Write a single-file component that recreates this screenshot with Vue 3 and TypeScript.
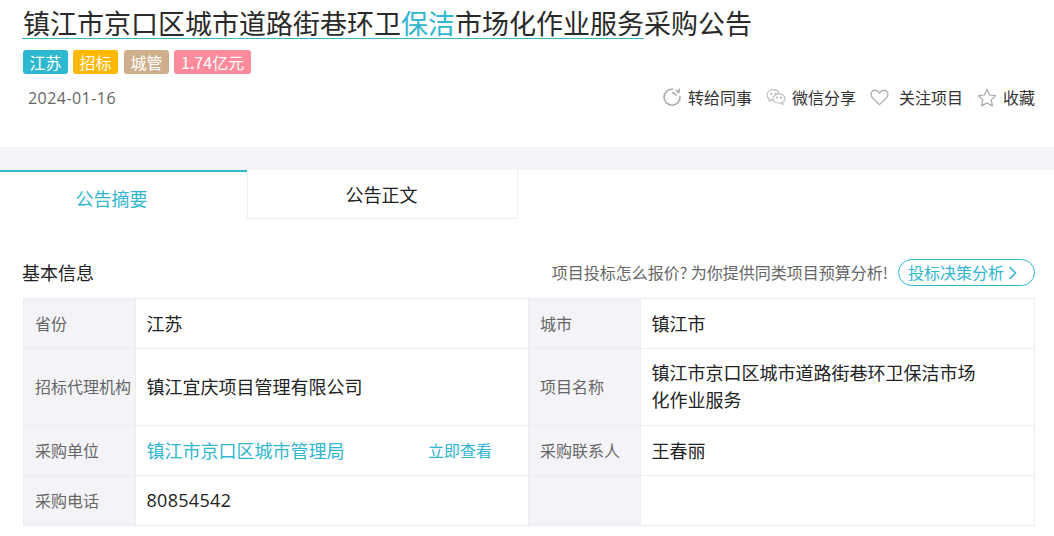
<script setup lang="ts">
const tags = [
  { text: '江苏', cls: 'tag-a' },
  { text: '招标', cls: 'tag-b' },
  { text: '城管', cls: 'tag-c' },
  { text: '1.74亿元', cls: 'tag-d' },
]
</script>

<template>
  <div class="page">
    <header class="head">
      <h1 class="title"><span class="under">镇江市京口区城市道路街巷环卫<em>保洁</em>市场化作业服务</span>采购公告</h1>
      <div class="tags">
        <span v-for="t in tags" :key="t.text" class="tag" :class="t.cls">{{ t.text }}</span>
      </div>
      <div class="meta">
        <span class="date">2024-01-16</span>
        <div class="actions">
          <span class="act a1">
            <svg width="20" height="20" viewBox="0 0 20 20" fill="none" stroke="#aaa" stroke-width="1.6">
              <path d="M10.5 2.200A8 8 0 1 0 18 9.500" stroke-linecap="round" />
              <path d="M14.200 3.400l2.600 2.300M16.800 5.700L17.300 2.400" stroke-linecap="round" />
              <path d="M14 8.200A4.600 4.600 0 0 0 10.400 5.600" stroke-linecap="round" />
            </svg>
            转给同事
          </span>
          <span class="act a2">
            <svg width="20" height="18" viewBox="0 0 20 18" fill="none" stroke="#bbb" stroke-width="1.1">
              <path d="M7.600 1.600C4 1.600 1 4 1 7c0 1.700 1 3.200 2.500 4.200L3 13l2.100-1.100c.7.2 1.300.3 2 .3" />
              <path d="M13 6.200C12.600 3.600 10.300 1.600 7.600 1.600" />
              <ellipse cx="13" cy="10.600" rx="6" ry="4.700" />
              <path d="M16.400 14.400l.6 1.900-2.200-1.200" />
              <circle cx="5.200" cy="5.800" r=".6" fill="#bbb" />
              <circle cx="9.600" cy="5.800" r=".6" fill="#bbb" />
              <circle cx="11" cy="9.600" r=".5" fill="#bbb" />
              <circle cx="15" cy="9.600" r=".5" fill="#bbb" />
            </svg>
            微信分享
          </span>
          <span class="act a3">
            <svg width="19" height="17" viewBox="0 0 19 17" fill="none" stroke="#aaa" stroke-width="1.3">
              <path d="M9.500 15.600L2.400 8.600C.6 6.800.6 4 2.300 2.400c1.800-1.700 4.700-1.400 6.200.4l1 1.200 1-1.200c1.500-1.800 4.400-2.100 6.200-.4 1.700 1.600 1.700 4.400-.1 6.200z" stroke-linejoin="round" />
            </svg>
            关注项目
          </span>
          <span class="act a4">
            <svg width="20" height="19" viewBox="0 0 20 19" fill="none" stroke="#aaa" stroke-width="1.2">
              <path d="M10 1.400l2.600 5.600 6 .7-4.400 4.200 1.200 6L10 15l-5.400 2.900 1.200-6L1.400 7.700l6-.7z" stroke-linejoin="round" />
            </svg>
            收藏
          </span>
        </div>
      </div>
    </header>

    <div class="band"></div>

    <nav class="tabs">
      <div class="tab on">公告摘要</div>
      <div class="tab off">公告正文</div>
    </nav>

    <section class="info">
      <div class="info-head">
        <h2 class="info-title">基本信息</h2>
        <div class="promo">
          <span class="promo-text">项目投标怎么报价<span class="qmark">?</span>为你提供同类项目预算分析!</span>
          <span class="btn"><span class="btn-text">投标决策分析</span>
            <svg width="10" height="14" viewBox="0 0 10 14" fill="none" stroke="#2eb8cf" stroke-width="1.6"><path d="M1.500 1l6 6-6 6" /></svg>
          </span>
        </div>
      </div>
      <table class="grid">
        <colgroup>
          <col class="c1" /><col class="c2" /><col class="c3" /><col class="c4" />
        </colgroup>
        <tbody>
          <tr class="r1">
            <th>省份</th>
            <td>江苏</td>
            <th>城市</th>
            <td>镇江市</td>
          </tr>
          <tr class="r2">
            <th>招标代理机构</th>
            <td>镇江宜庆项目管理有限公司</td>
            <th>项目名称</th>
            <td><div class="wrap">镇江市京口区城市道路街巷环卫保洁市场化作业服务</div></td>
          </tr>
          <tr class="r1">
            <th>采购单位</th>
            <td>
              <div class="buyer"><span class="link">镇江市京口区城市管理局</span><span class="look">立即查看</span></div>
            </td>
            <th>采购联系人</th>
            <td>王春丽</td>
          </tr>
          <tr class="r1">
            <th>采购电话</th>
            <td class="num">80854542</td>
            <th></th>
            <td></td>
          </tr>
        </tbody>
      </table>
    </section>
  </div>
</template>

<style>
html, body { margin: 0; background: #fff; overflow: hidden; }
</style>

<style scoped>
.page {
  width: 1054px;
  height: 536px;
  overflow: hidden;
  font-family: "Noto Sans CJK SC", "Open Sans", sans-serif;
  color: #222;
}
.head { padding: 5px 19px 0 23px; height: 140px; box-sizing: border-box; }
.title {
  margin: 0 0 0 -1px;
  font-size: 27px;
  font-weight: 400;
  line-height: 36px;
  height: 36px;
  color: #2a2a2a;
  white-space: nowrap;
}
.under { display: inline-block; height: 33px; line-height: 36px; padding-left: 1px; border-bottom: 1px solid #3ab4cc; }
.title em { font-style: normal; color: #30b6cf; }
.tags { display: flex; gap: 5px; margin-top: 9px; height: 24px; }
.tag {
  height: 24px;
  line-height: 24px;
  padding: 0 6.500px;
  border-radius: 3px;
  color: #fff;
  font-size: 16px;
}
.tag-a { background: #2eb8cf; }
.tag-b { background: #ffb800; }
.tag-c { background: #cfae8b; margin-left: 1px; }
.tag-d { background: #ff8a9b; padding: 0 7px; }
.meta { display: flex; justify-content: space-between; align-items: center; margin-top: 12px; height: 24px; }
.date { margin-left: 5px; font-size: 16px; color: #666; font-family: "Open Sans", sans-serif; letter-spacing: .45px; }
.actions { display: flex; font-size: 16px; color: #333; margin-top: -2px; }
.act { display: flex; align-items: center; }
.a1 svg { margin-right: 6px; }
.a2 { margin-left: 14px; }
.a2 svg { margin-right: 6px; }
.a3 { margin-left: 14px; }
.a3 svg { margin-right: 10px; }
.a4 { margin-left: 14px; }
.a4 svg { margin-right: 6px; }
.band { height: 23px; background: #f4f4f8; margin-top: 7px; }
.tabs { display: flex; height: 49px; }
.tab { box-sizing: border-box; text-align: center; font-size: 18px; }
.tab.on { width: 247px; border-top: 2px solid #2eb8cf; color: #30b6cf; height: 60px; padding: 13px 24px 0 0; line-height: 26px; }
.tab.off { width: 271px; border: 1px solid #ededf0; border-top: none; height: 49px; line-height: 48px; padding-right: 2px; color: #222; }
.info { padding: 0 19px 0 23px; }
.info-head { display: flex; justify-content: space-between; align-items: center; margin-top: 40px; height: 27px; }
.info-title { margin: -2px 0 0 -1px; font-size: 18px; font-weight: 400; color: #222; }
.promo { display: flex; align-items: center; font-size: 16px; color: #666; }
.promo-text { margin-top: -2px; }
.qmark { margin-right: 3.500px; }
.btn {
  box-sizing: border-box;
  display: flex;
  align-items: center;
  gap: 4px;
  margin-left: 10px;
  width: 137px;
  height: 27px;
  padding-left: 9px;
  border: 1px solid #2eb8cf;
  border-radius: 14px;
  color: #30b6cf;
}
.btn-text { margin-top: -1px; }
.grid {
  margin-top: 12px;
  width: 1011px;
  table-layout: fixed;
  border-collapse: collapse;
}
.c1 { width: 112px; }
.c2 { width: 393px; }
.c3 { width: 112px; }
.c4 { width: 394px; }
.grid th, .grid td { border: 1px solid #ededf0; padding: 0 11px 2px; text-align: left; }
.grid td { padding-left: 10.500px; }
.grid th { background: #f4f4f8; font-size: 16px; font-weight: 400; color: #666; white-space: nowrap; }
.grid td { font-size: 18px; color: #222; }
.grid td.num { font-family: "Open Sans", sans-serif; letter-spacing: .3px; }
.r1 { height: 50px; }
.r2 { height: 77px; }
.wrap { width: 330px; line-height: 27px; }
.buyer { display: flex; align-items: center; justify-content: space-between; padding-right: 25px; }
.link { color: #30b6cf; }
.look { font-size: 16px; color: #30b6cf; }
</style>
